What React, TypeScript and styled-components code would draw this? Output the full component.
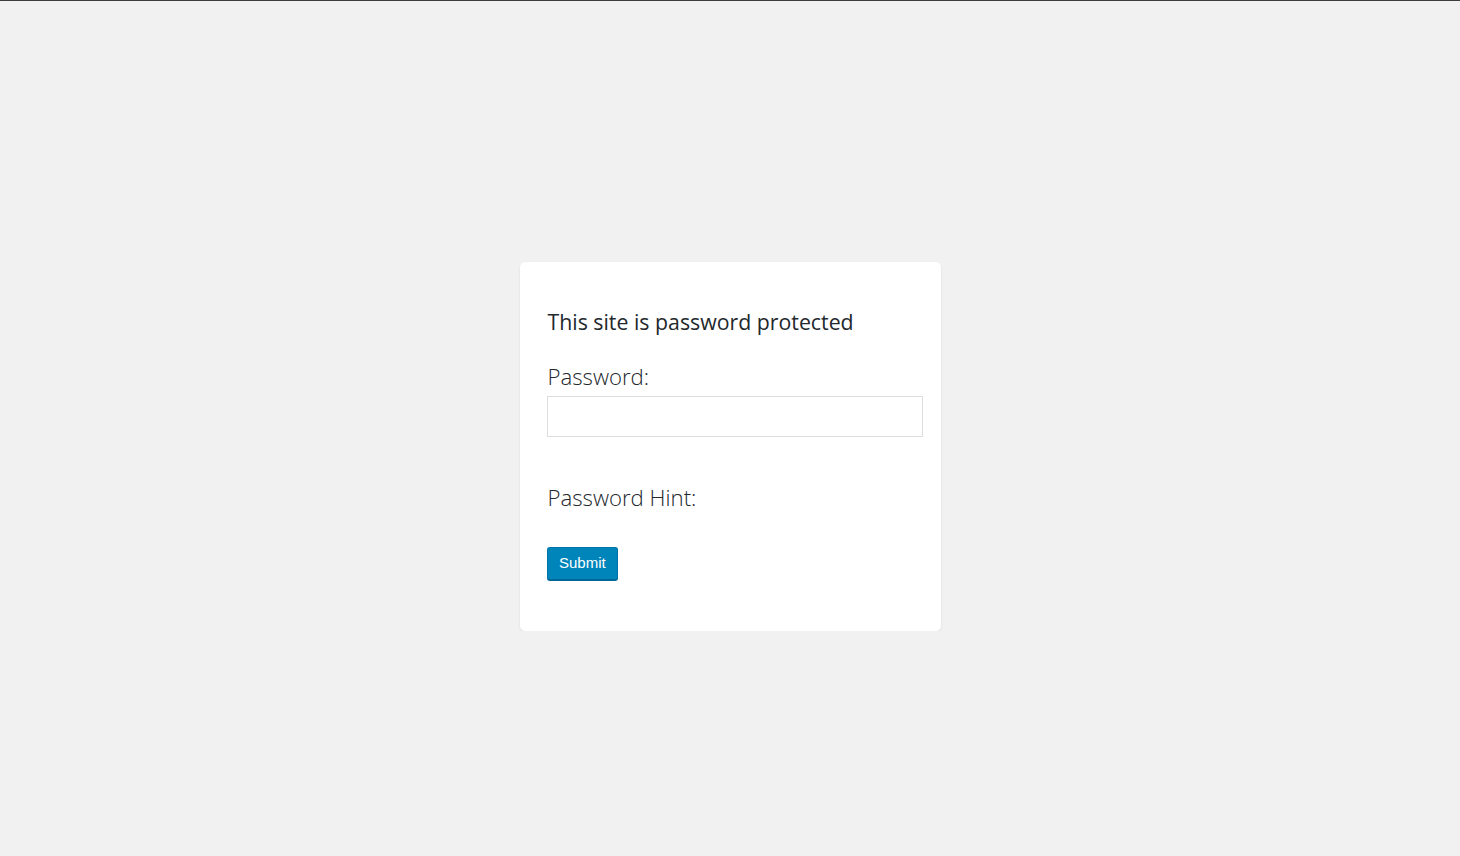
import React from "react";
import styled, { createGlobalStyle } from "styled-components";

const Global = createGlobalStyle`
  html, body { margin: 0; padding: 0; background: #f1f1f1; }
  body { border-top: 1px solid #3c3c3c; font-family: "Open Sans", "Noto Sans", sans-serif; color: #23282d; }
`;

const Page = styled.div`
  display: flex;
  justify-content: center;
  align-items: flex-start;
  padding-top: 261px;
`;

const Card = styled.form`
  width: 421px;
  box-sizing: border-box;
  background: #fff;
  border-radius: 5px;
  box-shadow: 0 1px 3px rgba(0, 0, 0, 0.08);
  padding: 44px 18px 51px 28px;
  display: flex;
  flex-direction: column;
  align-items: flex-start;
`;

const Title = styled.h1`
  margin: 0;
  font-size: 21.3px;
  font-weight: 400;
  line-height: 32px;
  color: #23282d;
`;

const Label = styled.label<{ $top: number }>`
  margin-top: ${(p) => p.$top}px;
  font-size: 22.2px;
  font-weight: 300;
  line-height: 32px;
  color: #23282d;
`;

const Input = styled.input`
  margin: 3px 0 0 -1px;
  width: 376px;
  height: 41px;
  box-sizing: border-box;
  border: 1px solid #dddddd;
  background: #fff;
  outline: none;
`;

const Button = styled.button`
  margin: 33px 0 0 -1px;
  height: 33px;
  padding: 0 11.5px 3px;
  background: #0085ba;
  border: 1px solid #0073aa;
  border-bottom-color: #006799;
  border-radius: 3px;
  box-shadow: 0 1px 0 #006799;
  color: #fff;
  font-family: "Liberation Sans", Arial, sans-serif;
  font-size: 15px;
  cursor: pointer;
`;

export default function App() {
  return (
    <>
      <Global />
      <Page>
        <Card onSubmit={(e) => e.preventDefault()}>
          <Title>This site is password protected</Title>
          <Label $top={23}>Password:</Label>
          <Input type="password" />
          <Label $top={45}>Password Hint:</Label>
          <Button type="submit">Submit</Button>
        </Card>
      </Page>
    </>
  );
}
